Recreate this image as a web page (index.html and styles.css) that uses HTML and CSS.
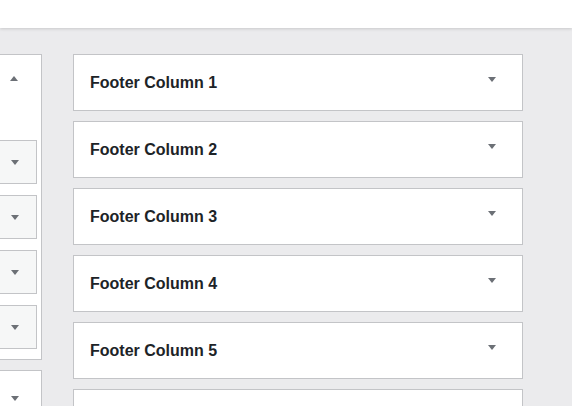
FILE: index.html
```html
<!DOCTYPE html>
<html>
<head>
<meta charset="utf-8">
<link rel="stylesheet" href="styles.css">
</head>
<body>
<div class="topbar"></div>
<div class="main">
  <div class="leftcol">
    <div class="lpanel">
      <div class="lhead"><svg class="arrow" width="8" height="5" viewBox="0 0 8 5"><polygon points="0,5 8,5 4,0"/></svg></div>
      <div class="boxes">
        <div class="gbox"><svg class="arrow" width="8" height="5" viewBox="0 0 8 5"><polygon points="0,0 8,0 4,5"/></svg></div>
        <div class="gbox"><svg class="arrow" width="8" height="5" viewBox="0 0 8 5"><polygon points="0,0 8,0 4,5"/></svg></div>
        <div class="gbox"><svg class="arrow" width="8" height="5" viewBox="0 0 8 5"><polygon points="0,0 8,0 4,5"/></svg></div>
        <div class="gbox"><svg class="arrow" width="8" height="5" viewBox="0 0 8 5"><polygon points="0,0 8,0 4,5"/></svg></div>
      </div>
    </div>
    <div class="lpanel lpanel2">
      <div class="lhead2"><svg class="arrow" width="8" height="5" viewBox="0 0 8 5"><polygon points="0,0 8,0 4,5"/></svg></div>
    </div>
  </div>
  <div class="rightcol">
    <div class="panel"><span class="title">Footer Column 1</span><svg class="arrow parrow" width="8" height="5" viewBox="0 0 8 5"><polygon points="0,0 8,0 4,5"/></svg></div>
    <div class="panel"><span class="title">Footer Column 2</span><svg class="arrow parrow" width="8" height="5" viewBox="0 0 8 5"><polygon points="0,0 8,0 4,5"/></svg></div>
    <div class="panel"><span class="title">Footer Column 3</span><svg class="arrow parrow" width="8" height="5" viewBox="0 0 8 5"><polygon points="0,0 8,0 4,5"/></svg></div>
    <div class="panel"><span class="title">Footer Column 4</span><svg class="arrow parrow" width="8" height="5" viewBox="0 0 8 5"><polygon points="0,0 8,0 4,5"/></svg></div>
    <div class="panel"><span class="title">Footer Column 5</span><svg class="arrow parrow" width="8" height="5" viewBox="0 0 8 5"><polygon points="0,0 8,0 4,5"/></svg></div>
    <div class="panel"></div>
  </div>
</div>
</body>
</html>
```
FILE: styles.css
```css
html, body {
  margin: 0;
  padding: 0;
  height: 100%;
  overflow: hidden;
  background: #ebebed;
  font-family: "Liberation Sans", Arial, sans-serif;
}
.topbar {
  height: 28px;
  background: #fff;
  box-shadow: 0 1px 3px rgba(0,0,0,0.15);
  position: relative;
  z-index: 1;
}
.main {
  display: flex;
  padding-top: 26px;
  gap: 31px;
}
.leftcol {
  width: 200px;
  margin-left: -158px;
  display: flex;
  flex-direction: column;
  gap: 10px;
  flex-shrink: 0;
}
.lpanel {
  background: #fff;
  border: 1px solid #c3c4c7;
  box-sizing: border-box;
}
.lhead {
  height: 85px;
  display: flex;
  justify-content: flex-end;
  align-items: flex-start;
  padding-right: 23px;
  padding-top: 21px;
  box-sizing: border-box;
}
.boxes {
  display: flex;
  flex-direction: column;
  gap: 11px;
  padding: 0 4px 10px 0;
}
.gbox {
  height: 44px;
  box-sizing: border-box;
  background: #f6f7f7;
  border: 1px solid #c3c4c7;
  display: flex;
  justify-content: flex-end;
  align-items: center;
  padding-right: 17px;
}
.lhead2 {
  height: 60px;
  display: flex;
  justify-content: flex-end;
  align-items: flex-start;
  padding-right: 22px;
  padding-top: 25px;
  box-sizing: border-box;
}
.arrow {
  display: block;
  fill: #6c7076;
  flex-shrink: 0;
}
.rightcol {
  width: 450px;
  display: flex;
  flex-direction: column;
  gap: 10px;
  flex-shrink: 0;
}
.panel {
  height: 57px;
  box-sizing: border-box;
  background: #fff;
  border: 1px solid #c3c4c7;
  display: flex;
  align-items: center;
  padding-left: 16px;
  padding-right: 26px;
}
.title {
  flex: 1;
  font-size: 16px;
  font-weight: 700;
  color: #1d2327;
}
.parrow {
  align-self: flex-start;
  margin-top: 22px;
}
```
